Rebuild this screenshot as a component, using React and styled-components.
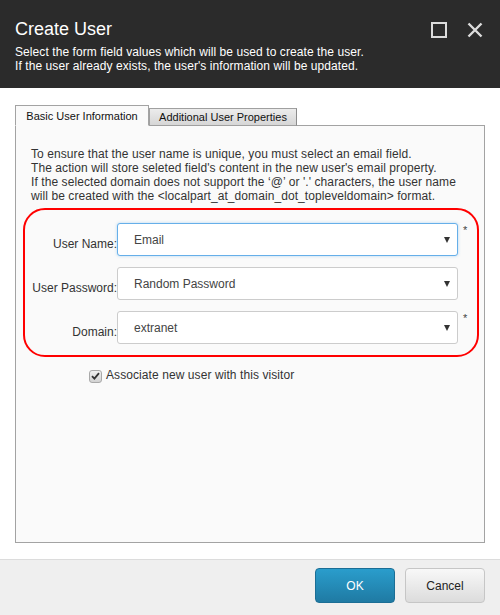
import React from "react";
import styled, { createGlobalStyle } from "styled-components";

const Global = createGlobalStyle`
  html, body { margin: 0; padding: 0; }
  body { font-family: "Liberation Sans", Arial, sans-serif; background: #fff; }
  * { box-sizing: border-box; }
`;

const Dialog = styled.div`
  width: 500px;
  height: 615px;
  display: flex;
  flex-direction: column;
  background: #fff;
`;

const Header = styled.header`
  height: 88px;
  background: #2b2b2b;
  color: #fff;
  padding: 18px 15px 0 15px;
  display: flex;
  justify-content: space-between;
  align-items: flex-start;
`;

const HeaderText = styled.div`
  display: flex;
  flex-direction: column;
`;

const Title = styled.h1`
  margin: 0;
  font-size: 18px;
  line-height: 22px;
  font-weight: normal;
`;

const Subtitle = styled.p`
  margin: 5px 0 0 0;
  font-size: 12px;
  line-height: 14px;
  letter-spacing: 0.08px;
`;

const HeaderActions = styled.div`
  display: flex;
  gap: 20px;
  margin-top: 4px;
  margin-right: 2px;
`;

const IconButton = styled.span`
  width: 16px;
  height: 16px;
  display: block;
  color: #dcdcdc;
  svg { display: block; }
`;

const Body = styled.main`
  flex: 1;
  padding: 17px 15px 16px 15px;
  display: flex;
  flex-direction: column;
`;

const TabRow = styled.div`
  display: flex;
  align-items: flex-end;
  height: 21px;
  margin-bottom: -1px;
  position: relative;
  z-index: 1;
`;

const Tab = styled.div`
  width: ${(p) => p.$w}px;
  height: ${(p) => (p.$active ? 21 : 18)}px;
  border: 1px solid ${(p) => (p.$active ? "#a3a3a3" : "#a0a0a0")};
  border-bottom-color: ${(p) => (p.$active ? "#fafafa" : "#a0a0a0")};
  ${(p) => !p.$active && "border-right-color: #8c8c8c;"}
  background: ${(p) =>
    p.$active ? "#fafafa" : "linear-gradient(#ececec, #d6d6d6)"};
  font-size: 11px;
  color: #111;
  display: flex;
  align-items: center;
  justify-content: center;
  padding-top: ${(p) => (p.$active ? 1 : 0)}px;
`;

const Panel = styled.section`
  flex: 1;
  border: 1px solid #a3a3a3;
  background: #fafafa;
  padding: 21px 5px 0 7px;
  display: flex;
  flex-direction: column;
`;

const Description = styled.p`
  margin: 0 0 0 8px;
  font-size: 12px;
  line-height: 14px;
  letter-spacing: 0.08px;
  color: #333;
`;

const FieldBox = styled.div`
  margin-top: 5px;
  border: 2px solid #f00;
  border-radius: 22px;
  padding: 13px 0 11px 0;
  display: grid;
  grid-template-columns: 92px 341px 1fr;
  row-gap: 11px;
`;

const Label = styled.label`
  align-self: end;
  text-align: right;
  font-size: 12px;
  line-height: 16px;
  padding-bottom: 4px;
  color: #333;
  white-space: nowrap;
`;

const Select = styled.div`
  height: 33px;
  border: 1px solid ${(p) => (p.$focus ? "#66afe9" : "#ccc")};
  border-radius: 3px;
  background: #fff;
  box-shadow: ${(p) =>
    p.$focus ? "0 0 3px rgba(102,175,233,0.5)" : "none"};
  display: flex;
  align-items: center;
  justify-content: space-between;
  padding: 0 7px 0 16px;
  font-size: 12px;
  color: #444;
`;

const Arrow = styled.span`
  width: 0;
  height: 0;
  border-left: 3.5px solid transparent;
  border-right: 3.5px solid transparent;
  border-top: 6px solid #333;
  margin-top: 1px;
`;

const Required = styled.span`
  font-size: 11px;
  line-height: 11px;
  color: #444;
  margin-left: 5px;
  margin-top: 2px;
`;

const CheckRow = styled.label`
  margin-top: 10px;
  margin-left: 66px;
  display: flex;
  align-items: center;
  gap: 4px;
  font-size: 12px;
  line-height: 16px;
  letter-spacing: 0.08px;
  color: #333;
`;

const CheckBox = styled.span`
  width: 13px;
  height: 13px;
  border: 1px solid #a9a9a9;
  border-radius: 3px;
  background: linear-gradient(#f0f0f0, #d2d2d2);
  display: flex;
  align-items: center;
  justify-content: center;
  margin-top: 2px;
  svg { display: block; }
`;

const Footer = styled.footer`
  height: 56px;
  background: #efefef;
  border-top: 1px solid #dcdcdc;
  display: flex;
  justify-content: flex-end;
  gap: 10px;
  padding: 8px 15px 0 0;
`;

const Button = styled.button`
  width: 80px;
  height: 35px;
  border-radius: 4px;
  font-family: "Liberation Sans", Arial, sans-serif;
  font-size: 12px;
  border: 1px solid ${(p) => (p.$primary ? "#1b6e95" : "#c6c6c6")};
  color: ${(p) => (p.$primary ? "#fff" : "#222")};
  background: ${(p) =>
    p.$primary
      ? "linear-gradient(#2a9dcc, #1f7aa3)"
      : "linear-gradient(#f8f8f8, #dcdcdc)"};
  padding: 0;
`;

const fields = [
  { label: "User Name:", value: "Email", focus: true, required: true },
  { label: "User Password:", value: "Random Password", required: false },
  { label: "Domain:", value: "extranet", required: true },
];

export default function App() {
  return (
    <>
      <Global />
      <Dialog>
        <Header>
          <HeaderText>
            <Title>Create User</Title>
            <Subtitle>
              Select the form field values which will be used to create the user.
              <br />
              If the user already exists, the user's information will be updated.
            </Subtitle>
          </HeaderText>
          <HeaderActions>
            <IconButton>
              <svg width="16" height="16" viewBox="0 0 16 16">
                <rect x="1" y="1" width="14" height="14" fill="none" stroke="currentColor" strokeWidth="2" />
              </svg>
            </IconButton>
            <IconButton>
              <svg width="16" height="16" viewBox="0 0 16 16">
                <path d="M1.5 1.5 L14.5 14.5 M14.5 1.5 L1.5 14.5" stroke="currentColor" strokeWidth="2.4" />
              </svg>
            </IconButton>
          </HeaderActions>
        </Header>
        <Body>
          <TabRow>
            <Tab $active $w={134}>Basic User Information</Tab>
            <Tab $w={148}>Additional User Properties</Tab>
          </TabRow>
          <Panel>
            <Description>
              To ensure that the user name is unique, you must select an email field.
              <br />
              The action will store seleted field's content in the new user's email property.
              <br />
              If the selected domain does not support the ‘@’ or '.' characters, the user name
              <br />
              will be created with the &lt;localpart_at_domain_dot_topleveldomain&gt; format.
            </Description>
            <FieldBox>
              {fields.map((f) => (
                <React.Fragment key={f.label}>
                  <Label>{f.label}</Label>
                  <Select $focus={f.focus}>
                    <span>{f.value}</span>
                    <Arrow />
                  </Select>
                  {f.required ? <Required>*</Required> : <span />}
                </React.Fragment>
              ))}
            </FieldBox>
            <CheckRow>
              <CheckBox>
                <svg width="9" height="8" viewBox="0 0 9 8">
                  <path d="M1 4.2 L3.4 6.6 L8 1.2" fill="none" stroke="#333" strokeWidth="1.8" />
                </svg>
              </CheckBox>
              Associate new user with this visitor
            </CheckRow>
          </Panel>
        </Body>
        <Footer>
          <Button $primary>OK</Button>
          <Button>Cancel</Button>
        </Footer>
      </Dialog>
    </>
  );
}
